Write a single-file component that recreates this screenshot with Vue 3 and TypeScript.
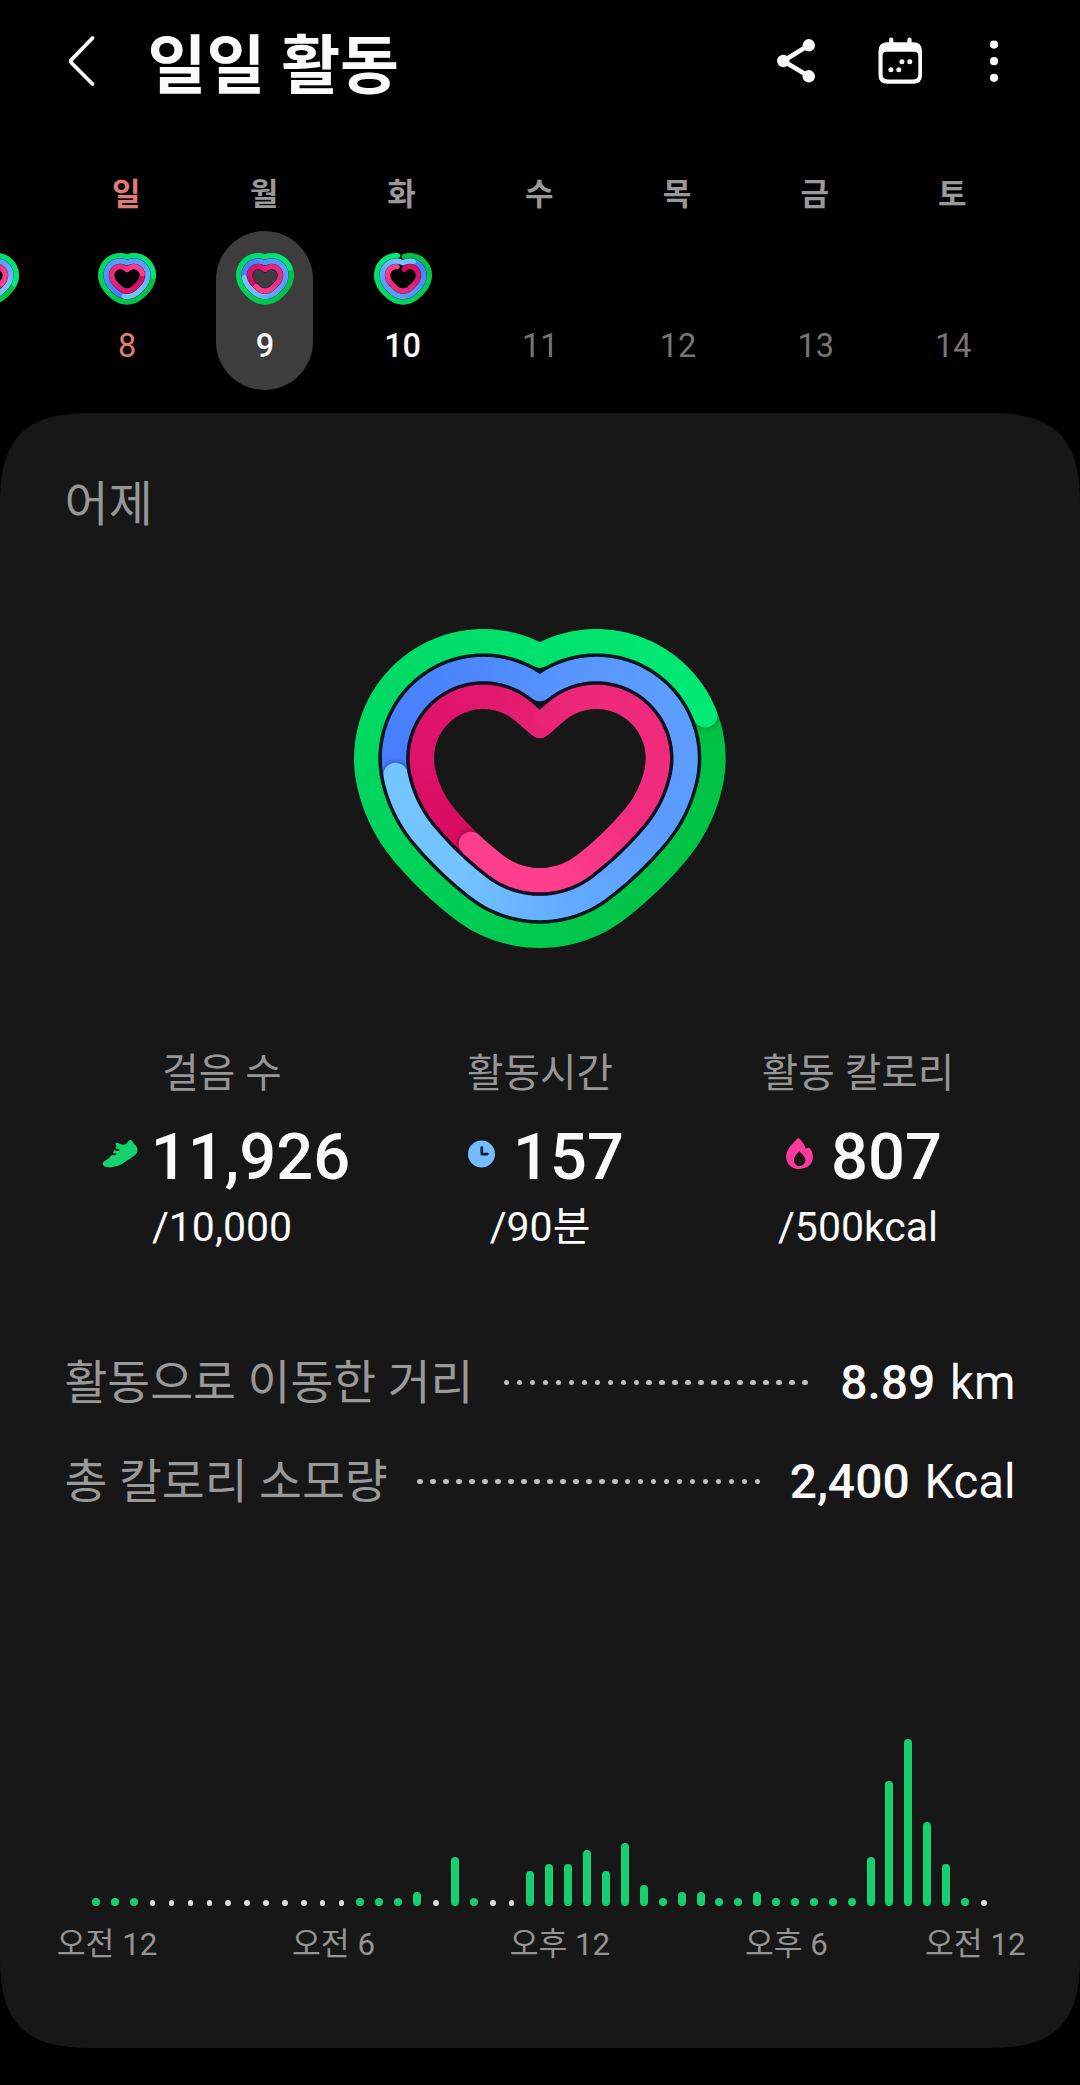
<script setup lang="ts">
type Pt = [number, number]
type Rgb = [number, number, number]

interface RingSpec {
  /** Laps completed, measured clockwise from the cleft of the heart. */
  progress: number
  /** Colour stops from the tail of the visible lap to its head. */
  stops: string[]
}

interface Segment {
  points: string
  color: string
}

interface Ring {
  outline: string
  segments: Segment[]
  head: Pt
  headColor: string
  tail: Pt | null
  tailColor: string
  width: number
}

const GREEN = ['#00c143', '#00c64a', '#00d45c', '#00df6b', '#00ea75']
const BLUE = ['#467dff', '#4c85ff', '#5795ff', '#5d9eff', '#5b9bff', '#63aaff', '#73c3ff', '#74c4ff']
const PINK = ['#d80b60', '#de1268', '#e2176d', '#eb2778', '#f02b7d', '#f12d7f', '#ff3f8e', '#ff3f8e']

const MAX_SLOPE = 0.719

/** Heart centre line at scale s, pushed outwards by d from the inner opening. */
function heartPoints(s: number, d: number): Pt[] {
  const cx = 629.5 * s
  const cy = 475 * s
  const lobe = 169.5 * s
  const r = 148 * s + d
  const half: Pt[] = []
  const natural = Math.asin(Math.min(1, lobe / r))
  const start = Math.min(natural, MAX_SLOPE)
  if (natural > MAX_SLOPE) {
    const x = lobe - r * Math.sin(start)
    const y = cy - r * Math.cos(start)
    const vy = y + x * Math.tan(start)
    for (let i = 0; i < 6; i++) half.push([(x * i) / 6, vy + ((y - vy) * i) / 6])
  }
  const arc = (ox: number, oy: number, rad: number, a0: number, a1: number, n: number) => {
    for (let i = 0; i <= n; i++) {
      const a = a0 + ((a1 - a0) * i) / n
      half.push([ox + rad * Math.sin(a), oy - rad * Math.cos(a)])
    }
  }
  const shoulder = Math.PI / 2 + 0.2094
  const flank = Math.PI / 2 + 0.6981
  const joint = Math.PI / 2 + 0.9151
  arc(lobe, cy, r, -start, shoulder, 60)
  arc(40.4 * s, 447.6 * s, 280 * s + d, shoulder, flank, 24)
  arc(-456 * s, 30.9 * s, 928 * s + d, flank, joint, 24)
  arc(0, 624 * s, 180 * s + d, joint, Math.PI, 30)
  const right = half.map(([x, y]): Pt => [cx + x, y])
  const left = half.map(([x, y]): Pt => [cx - x, y]).reverse()
  return resample([...right, ...left], 180)
}

function resample(pts: Pt[], n: number): Pt[] {
  const len = [0]
  for (let i = 1; i < pts.length; i++) {
    len.push(len[i - 1] + Math.hypot(pts[i][0] - pts[i - 1][0], pts[i][1] - pts[i - 1][1]))
  }
  const total = len[len.length - 1]
  const out: Pt[] = []
  let j = 1
  for (let i = 0; i <= n; i++) {
    const t = (total * i) / n
    while (j < pts.length - 1 && len[j] < t) j++
    const span = len[j] - len[j - 1] || 1
    const k = (t - len[j - 1]) / span
    out.push([
      pts[j - 1][0] + (pts[j][0] - pts[j - 1][0]) * k,
      pts[j - 1][1] + (pts[j][1] - pts[j - 1][1]) * k,
    ])
  }
  return out
}

const toRgb = (hex: string): Rgb => [1, 3, 5].map((i) => parseInt(hex.slice(i, i + 2), 16)) as Rgb

function mix(stops: string[], t: number): string {
  const p = Math.min(0.9999, Math.max(0, t)) * (stops.length - 1)
  const i = Math.floor(p)
  const a = toRgb(stops[i])
  const b = toRgb(stops[i + 1])
  return `rgb(${a.map((v, k) => Math.round(v + (b[k] - v) * (p - i))).join(',')})`
}

const fmt = (pts: Pt[]) => pts.map(([x, y]) => `${x.toFixed(2)},${y.toFixed(2)}`).join(' ')

function makeRing(s: number, d: number, width: number, spec: RingSpec): Ring {
  const pts = heartPoints(s, d)
  const n = pts.length - 1
  const at = (i: number): Pt => pts[((i % n) + n) % n]
  const end = Math.round(spec.progress * n)
  const span = Math.min(n, end)
  const begin = end - span
  const segments: Segment[] = []
  for (let i = 0; i < span; i++) {
    const stretch = i < span - 1 ? [at(begin + i), at(begin + i + 1), at(begin + i + 2)] : [at(begin + i), at(begin + i + 1)]
    segments.push({ points: fmt(stretch), color: mix(spec.stops, i / span) })
  }
  return {
    outline: fmt(pts.slice(0, n)),
    segments,
    head: at(end),
    headColor: spec.stops[spec.stops.length - 1],
    tail: spec.progress < 1 ? at(0) : null,
    tailColor: spec.stops[0],
    width,
  }
}

const laps = (g: number, b: number, p: number): RingSpec[] => [
  { progress: g, stops: GREEN },
  { progress: b, stops: BLUE },
  { progress: p, stops: PINK },
]

const big = [203.5, 120, 36.5].map((d, i) => makeRing(1, d, 73, laps(1.193, 1.744, 1.616)[i]))
const bigGaps = [
  { points: fmt(heartPoints(1, 161.7).slice(0, -1)), color: '#03161c' },
  { points: fmt(heartPoints(1, 78.3).slice(0, -1)), color: '#120f20' },
]

const small = (g: number, b: number, p: number) =>
  [41, 24.5, 8].map((d, i) => makeRing(0.12, d, 14.8, laps(g, b, p)[i]))

interface Day {
  name: string
  date: string
  kind: 'past' | 'sunday' | 'selected' | 'today' | 'future'
  rings?: Ring[]
}

const days: Day[] = [
  { name: '', date: '', kind: 'past', rings: small(1.3, 1.45, 1.35) },
  { name: '일', date: '8', kind: 'sunday', rings: small(1.25, 1.52, 1.22) },
  { name: '월', date: '9', kind: 'selected', rings: small(1.193, 1.744, 1.614) },
  { name: '화', date: '10', kind: 'today', rings: small(0.965, 1.09, 0.93) },
  { name: '수', date: '11', kind: 'future' },
  { name: '목', date: '12', kind: 'future' },
  { name: '금', date: '13', kind: 'future' },
  { name: '토', date: '14', kind: 'future' },
]

const stats = [
  { icon: 'shoe', label: '걸음 수', value: '11,926', goal: '/10,000' },
  { icon: 'clock', label: '활동시간', value: '157', goal: '/90분' },
  { icon: 'flame', label: '활동 칼로리', value: '807', goal: '/500kcal' },
]

const totals = [
  { label: '활동으로 이동한 거리', value: '8.89', unit: 'km', dots: 24 },
  { label: '총 칼로리 소모량', value: '2,400', unit: 'Kcal', dots: 27 },
]

/** Half-hourly activity; 0 stands for no movement. */
const bars = [
  8, 8, 8, 0, 0, 0, 0, 0, 0, 0, 0, 0, 0, 0, 8, 8, 8, 14, 0, 49, 8, 0, 0, 35,
  42, 42, 55.5, 35, 62.5, 21, 8, 14, 14, 8, 8, 14, 8, 8, 8, 8, 8, 49, 125, 166.5, 83.5, 42, 8, 0,
]

const ticks = ['오전 12', '오전 6', '오후 12', '오후 6', '오전 12']
</script>

<template>
  <div class="page">
    <header class="bar">
      <svg class="back" viewBox="0 0 32 56" width="32" height="56">
        <path d="M26.5 5 L5.6 26.6 Q4 28.3 5.6 30 L26.5 51" fill="none" stroke="#fafafa" stroke-width="3.8" stroke-linecap="round" />
      </svg>
      <h1>일일 활동</h1>
      <svg class="share" viewBox="0 0 44 44" width="44" height="44">
        <path d="M34.8 6.3 L9.3 22 L34.8 37.3" fill="none" stroke="#fafafa" stroke-width="4.6" />
        <g fill="#fafafa">
          <circle cx="34.8" cy="6.3" r="6.2" />
          <circle cx="9.3" cy="22" r="6.2" />
          <circle cx="34.8" cy="37.3" r="6.2" />
        </g>
      </svg>
      <svg class="calendar" viewBox="0 0 48 52" width="48" height="52">
        <g fill="#fafafa">
          <rect x="13.1" y="2.6" width="4.2" height="9" rx="2.1" />
          <rect x="31.4" y="2.6" width="4.2" height="9" rx="2.1" />
          <path
            fill-rule="evenodd"
            d="M11.4 7.3 H37.2 Q46 7.3 46 16.1 V40 Q46 48.7 37.2 48.7 H11.4 Q2.5 48.7 2.5 40 V16.1 Q2.5 7.3 11.4 7.3 Z M10.6 16.7 Q6.6 16.7 6.6 20.7 V39.6 Q6.6 44.5 11.6 44.5 H37.4 Q42.3 44.5 42.3 39.6 V20.7 Q42.3 16.7 38.3 16.7 Z"
          />
          <circle cx="25.9" cy="26.7" r="2.5" />
          <circle cx="33.8" cy="26.7" r="2.5" />
          <circle cx="14.9" cy="34.8" r="2.5" />
          <circle cx="22.8" cy="34.8" r="2.5" />
        </g>
      </svg>
      <svg class="more" viewBox="0 0 12 44" width="12" height="44">
        <g fill="#fafafa">
          <circle cx="6" cy="5.6" r="4.1" />
          <circle cx="6" cy="22.2" r="4.1" />
          <circle cx="6" cy="38.8" r="4.1" />
        </g>
      </svg>
    </header>

    <nav class="week">
      <div v-for="(day, di) in days" :key="di" class="day" :class="day.kind">
        <span class="name">{{ day.name }}</span>
        <div class="pill">
          <svg class="mini" viewBox="-14.5 -21.5 180 180" width="60" height="60">
            <template v-if="day.rings">
              <polygon
                v-for="(ring, ri) in day.rings"
                :key="'b' + ri"
                :points="ring.outline"
                fill="none"
                :stroke="ri === 2 ? '#2b1448' : '#07394a'"
                :stroke-width="ri === 0 || ring.tail ? 0 : ring.width + 4.5"
                stroke-linejoin="round"
              />
              <g v-for="(ring, ri) in day.rings" :key="ri" fill="none" stroke-linejoin="round">
                <circle v-if="ring.tail" :cx="ring.tail[0] + 3" :cy="ring.tail[1]" :r="ring.width / 2" :fill="ring.tailColor" />
                <polyline
                  v-for="(seg, si) in ring.segments"
                  :key="si"
                  :points="seg.points"
                  :stroke="seg.color"
                  :stroke-width="ring.width"
                />
                <circle :cx="ring.head[0]" :cy="ring.head[1]" :r="ring.width / 2" :fill="ring.headColor" />
              </g>
            </template>
          </svg>
          <span class="date">{{ day.date }}</span>
        </div>
      </div>
    </nav>

    <main class="card">
      <h2>어제</h2>

      <svg class="heart" viewBox="60 75 1140 984" width="380" height="328">
        <defs>
          <filter id="soft" x="-50%" y="-50%" width="200%" height="200%">
            <feGaussianBlur stdDeviation="7" />
          </filter>
          <mask v-for="(ring, ri) in big" :id="'lane' + ri" :key="ri" maskUnits="userSpaceOnUse" x="0" y="0" width="1260" height="1110">
            <polygon :points="ring.outline" fill="none" stroke="#fff" :stroke-width="ring.width" stroke-linejoin="round" />
          </mask>
        </defs>
        <polygon
          v-for="(gap, gi) in bigGaps"
          :key="gi"
          :points="gap.points"
          fill="none"
          :stroke="gap.color"
          stroke-width="16"
          stroke-linejoin="round"
        />
        <g v-for="(ring, ri) in big" :key="'r' + ri" fill="none" stroke-linejoin="round" :mask="`url(#lane${ri})`">
          <g>
            <polyline
              v-for="(seg, si) in ring.segments.slice(0, 60)"
              :key="si"
              :points="seg.points"
              :stroke="seg.color"
              :stroke-width="ring.width + 2"
            />
          </g>
          <circle :cx="ring.head[0]" :cy="ring.head[1]" :r="ring.width / 2 + 4" fill="#000" opacity="0.32" filter="url(#soft)" />
          <polyline
            v-for="(seg, si) in ring.segments.slice(40)"
            :key="'t' + si"
            :points="seg.points"
            :stroke="seg.color"
            :stroke-width="ring.width + 2"
          />
          <circle :cx="ring.head[0]" :cy="ring.head[1]" :r="ring.width / 2" :fill="ring.headColor" />
        </g>
      </svg>

      <section class="stats">
        <div v-for="stat in stats" :key="stat.icon" class="stat">
          <span class="label">{{ stat.label }}</span>
          <div class="value">
            <svg v-if="stat.icon === 'shoe'" viewBox="119 322 120 120" width="40" height="40">
              <path
                fill="#14d36f"
                d="M212 331 Q216 330 219 335 Q224 344 231 350 Q236 357 234 366 Q232 373 225 378 L188 403 Q172 413 156 413 Q140 414 133 409 Q129 404 131 399 Q133 395 141 391 Q150 386 157 376 L166 377 Q171 377 171 374 Q170 372 167 371 L161 370 L164 362 L176 364 Q181 364 181 361 Q180 359 177 358 L167 356 L172 350 Q167 344 169 341 Q171 338 176 340 Q184 345 193 345 Q203 344 207 335 Q209 332 212 331 Z"
              />
            </svg>
            <svg v-else-if="stat.icon === 'clock'" viewBox="0 0 40 40" width="40" height="40">
              <circle cx="20.5" cy="17" r="13.5" fill="#74bcff" />
              <path d="M20.8 10.7 V17.1 H26.4" fill="none" stroke="#10233a" stroke-width="2.8" stroke-linecap="round" stroke-linejoin="round" />
            </svg>
            <svg v-else viewBox="717 321 120 120" width="40" height="40">
              <path
                fill="#ff3a9c"
                fill-rule="evenodd"
                d="M775 323 Q793 338 797 357 Q802 352 809 354 Q819 366 819 380 Q818 398 806 408 Q794 417 778 417 Q761 417 750 407 Q738 396 738 377 Q740 361 752 347 Q765 333 775 323 Z M778 364 Q771 371 765 379 Q761 386 762 393 Q765 408 778 409 Q792 408 796 394 Q797 386 792 379 Q785 371 778 364 Z"
              />
            </svg>
            <strong>{{ stat.value }}</strong>
          </div>
          <span class="goal">{{ stat.goal }}</span>
        </div>
      </section>

      <section class="totals">
        <div v-for="row in totals" :key="row.label" class="total">
          <span class="what">{{ row.label }}</span>
          <span class="leader"><i v-for="n in row.dots" :key="n" /></span>
          <span class="amount"><b>{{ row.value }}</b> {{ row.unit }}</span>
        </div>
      </section>

      <section class="chart">
        <div class="bars">
          <span v-for="(h, i) in bars" :key="i" class="slot">
            <i :class="{ idle: h === 0 }" :style="h ? { height: h + 'px' } : undefined" />
          </span>
        </div>
        <div class="ticks">
          <span v-for="(tick, i) in ticks" :key="i">{{ tick }}</span>
        </div>
      </section>
    </main>
  </div>
</template>

<style>
body {
  background: #000;
}
</style>

<style scoped>
.page {
  width: 1080px;
  height: 2085px;
  overflow: hidden;
  background: #000;
  color: #fafafa;
  font-family: Roboto, 'Noto Sans CJK KR', sans-serif;
}
svg {
  display: block;
  flex: none;
}
.bar {
  display: flex;
  align-items: center;
  height: 122px;
  padding-left: 66px;
}
h1 {
  flex: 1;
  margin: 12px 0 0 49.5px;
  font-size: 64px;
  font-weight: 700;
  line-height: 80px;
}
.share {
  margin-right: 58.5px;
}
.calendar {
  margin-right: 64.2px;
}
.more {
  margin-right: 79.8px;
}
.week {
  display: flex;
  width: max-content;
  margin-left: -79.3px;
  padding-top: 53.4px;
}
.day {
  display: flex;
  flex-direction: column;
  align-items: center;
  width: 137.7px;
  height: 237.6px;
}
.name {
  height: 40px;
  margin-right: 2px;
  font-size: 31px;
  font-weight: 700;
  line-height: 40px;
  color: #999;
}
.pill {
  display: flex;
  flex-direction: column;
  align-items: center;
  box-sizing: border-box;
  width: 97px;
  height: 159px;
  margin-top: 15.6px;
  padding-top: 18px;
  border-radius: 48.5px;
}
.date {
  margin-top: 17px;
  font-size: 32.5px;
  line-height: 40px;
}
.sunday .name,
.sunday .date {
  color: #e07b75;
}
.selected .pill {
  background: #3d3d3d;
}
.selected .date,
.today .date {
  font-weight: 500;
}
.future .date {
  color: #757575;
}
.card {
  box-sizing: border-box;
  height: 1635px;
  padding: 62.5px 64.5px 0;
  background: #171717;
  clip-path: path('M0 90 C0 25 25 0 90 0 H990 C1055 0 1080 25 1080 90 V1545 C1080 1610 1055 1635 990 1635 H90 C25 1635 0 1610 0 1545 Z');
}
h2 {
  margin: 0;
  font-size: 48px;
  font-weight: 400;
  line-height: 60px;
  color: #969696;
}
.heart {
  margin: 89.5px auto 0;
}
.stats {
  display: flex;
  margin: 97.5px -1.5px 0;
}
.stat {
  display: flex;
  flex: 1;
  flex-direction: column;
  align-items: center;
}
.label {
  font-size: 39.7px;
  line-height: 48px;
  color: #969696;
}
.value {
  display: flex;
  align-items: center;
  height: 76px;
  margin-top: 20.5px;
}
.value svg {
  margin: 0 12px 0 5px;
}
.value strong {
  font-size: 65px;
  font-weight: 500;
  line-height: 76px;
}
.goal {
  margin-top: 7.7px;
  font-size: 41px;
  line-height: 48px;
}
.totals {
  display: flex;
  flex-direction: column;
  gap: 39px;
  margin-top: 101.9px;
}
.total {
  display: flex;
  align-items: center;
  height: 60px;
  white-space: pre;
}
.what {
  font-size: 46.6px;
  line-height: 60px;
  color: #999;
}
.leader {
  display: flex;
  flex: 1;
  justify-content: center;
}
.total:first-child .leader {
  padding-right: 2px;
}
.leader i {
  width: 5.6px;
  height: 5.6px;
  margin: 0 3.7px;
  border-radius: 50%;
  background: #bfbfbf;
}
.amount {
  font-size: 47.3px;
  line-height: 60px;
  word-spacing: 3px;
}
.amount b {
  font-size: 48px;
  font-weight: 500;
}
.chart {
  margin-top: 224.4px;
}
.bars {
  display: flex;
  justify-content: space-between;
  height: 170px;
  margin: 0 27.5px;
}
.slot {
  display: flex;
  align-items: flex-end;
  justify-content: center;
  width: 8px;
}
.slot i {
  width: 8px;
  border-radius: 4px;
  background: #17cf6e;
}
.slot .idle {
  width: 5.6px;
  height: 5.6px;
  background: #dedede;
}
.ticks {
  display: flex;
  gap: 134.7px;
  margin: 19.5px 0 0 -7.7px;
  font-size: 31.3px;
  line-height: 40px;
  color: #949494;
  white-space: nowrap;
}
.ticks span:last-child {
  margin-left: -37.5px;
}
</style>
